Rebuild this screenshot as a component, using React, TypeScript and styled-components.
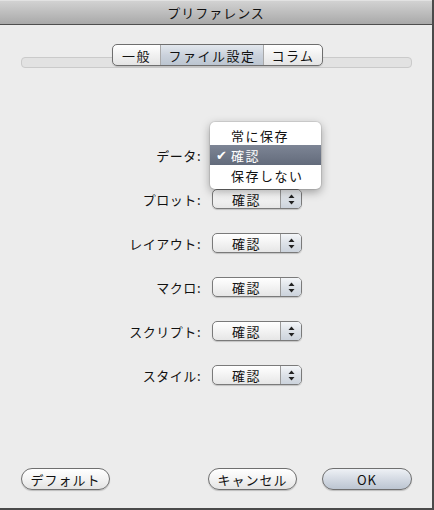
import React from "react";
import styled, { createGlobalStyle } from "styled-components";

const GlobalStyle = createGlobalStyle`
  html, body {
    margin: 0;
    padding: 0;
    background: #ececec;
  }
  body {
    font-family: "Noto Sans CJK JP", "Liberation Sans", sans-serif;
    -webkit-font-smoothing: antialiased;
  }
`;

const rows = ["データ", "プロット", "レイアウト", "マクロ", "スクリプト", "スタイル"];

const Arrows = () => (
  <svg width="7" height="11" viewBox="0 0 7 11">
    <path d="M3.5 0.5 L6.5 4 L0.5 4 Z" fill="#222" />
    <path d="M3.5 10.5 L6.5 7 L0.5 7 Z" fill="#222" />
  </svg>
);

const App = () => {
  return (
    <>
      <GlobalStyle />
      <Window>
        <TitleBar>プリファレンス</TitleBar>
        <Body>
          <TabArea>
            <TabStrip>
              <Tab width={47}>一般</Tab>
              <Tab width={103} selected>
                ファイル設定
              </Tab>
              <Tab width={59}>コラム</Tab>
            </TabStrip>
            <Groove />
          </TabArea>
          <Form>
            {rows.map((label, i) => (
              <Row key={label}>
                <Label>{label}:</Label>
                <PopupWrap>
                  {i > 0 && (
                    <Popup>
                      <span className="value">確認</span>
                      <span className="arrows">
                        <Arrows />
                      </span>
                    </Popup>
                  )}
                  {i === 0 && (
                    <Menu>
                      <MenuItem>常に保存</MenuItem>
                      <MenuItem active>
                        <span className="check">✔</span>確認
                      </MenuItem>
                      <MenuItem>保存しない</MenuItem>
                    </Menu>
                  )}
                </PopupWrap>
              </Row>
            ))}
          </Form>
          <Footer>
            <Button>デフォルト</Button>
            <div className="right">
              <Button>キャンセル</Button>
              <Button primary>OK</Button>
            </div>
          </Footer>
        </Body>
      </Window>
    </>
  );
};

const Window = styled.div`
  width: 434px;
  height: 510px;
  box-sizing: border-box;
  display: flex;
  flex-direction: column;
  border-right: 2px solid #4a4a4a;
  border-bottom: 2px solid #4a4a4a;
  background: #ececec;
  overflow: hidden;
`;

const TitleBar = styled.div`
  height: 23px;
  flex-shrink: 0;
  display: flex;
  align-items: center;
  justify-content: center;
  border-top: 1px solid #e2e2e2;
  border-bottom: 1px solid #4e4e4e;
  background: linear-gradient(#d2d2d2, #a9a9a9);
  font-size: 13px;
  color: #111;
  letter-spacing: 1px;
`;

const Body = styled.div`
  flex: 1;
  display: flex;
  flex-direction: column;
  padding: 19px 20px 0 21px;
`;

const TabArea = styled.div`
  display: flex;
  flex-direction: column;
  align-items: center;
`;

const TabStrip = styled.div`
  display: flex;
  height: 20px;
  margin-bottom: -9px;
  margin-left: 2px;
  position: relative;
  z-index: 1;
  border: 1px solid #6e6e6e;
  border-radius: 5px;
  overflow: hidden;
  background: linear-gradient(#ffffff, #f1f1f1 50%, #e4e4e4);
  box-shadow: 0 1px 1px rgba(0, 0, 0, 0.15);
`;

const Tab = styled.div<{ selected?: boolean; width: number }>`
  width: ${(p) => p.width}px;
  box-sizing: border-box;
  display: flex;
  align-items: center;
  justify-content: center;
  font-size: 13px;
  letter-spacing: 1.5px;
  color: #111;
  border-left: 1px solid #a9a9a9;
  background: ${(p) =>
    p.selected ? "linear-gradient(#e3e8ee, #cbd2dc 50%, #bcc5d0)" : "transparent"};
  &:first-child {
    border-left: none;
  }
`;

const Groove = styled.div`
  align-self: stretch;
  height: 11px;
  box-sizing: border-box;
  border: 1px solid #cacaca;
  border-radius: 4px;
  background: #e2e2e2;
`;

const Form = styled.div`
  display: flex;
  flex-direction: column;
  gap: 24px;
  padding-top: 77px;
  flex: 1;
`;

const Row = styled.div`
  display: grid;
  grid-template-columns: 180px 90px;
  column-gap: 11px;
  height: 20px;
  align-items: center;
`;

const Label = styled.div`
  text-align: right;
  font-size: 13px;
  letter-spacing: 0.5px;
  color: #111;
`;

const PopupWrap = styled.div`
  position: relative;
  height: 20px;
`;

const Popup = styled.div`
  height: 20px;
  box-sizing: border-box;
  display: flex;
  border: 1px solid #7a7a7a;
  border-radius: 5px;
  background: linear-gradient(#ffffff, #f3f3f3 50%, #e6e6e6);
  box-shadow: 0 1px 1px rgba(0, 0, 0, 0.18);
  overflow: hidden;
  .value {
    flex: 1;
    display: flex;
    align-items: center;
    justify-content: center;
    font-size: 13px;
    letter-spacing: 1.5px;
    color: #111;
  }
  .arrows {
    width: 20px;
    display: flex;
    align-items: center;
    justify-content: center;
    border-left: 1px solid #9a9a9a;
    background: linear-gradient(#f4f6f9, #dde2e8 50%, #ccd3dc);
  }
`;

const Menu = styled.div`
  position: absolute;
  left: -2px;
  top: -23px;
  width: 111px;
  padding: 3px 0 4px;
  box-sizing: border-box;
  background: #ffffff;
  border-radius: 5px;
  box-shadow: 0 3px 10px rgba(0, 0, 0, 0.35), 0 0 0 1px rgba(0, 0, 0, 0.08);
  z-index: 2;
`;

const MenuItem = styled.div<{ active?: boolean }>`
  position: relative;
  height: 20px;
  display: flex;
  align-items: center;
  padding-left: 21px;
  font-size: 13px;
  letter-spacing: 1.5px;
  color: ${(p) => (p.active ? "#ffffff" : "#111")};
  background: ${(p) => (p.active ? "linear-gradient(#7d8595, #636b7b)" : "transparent")};
  .check {
    position: absolute;
    left: 6px;
    font-family: "DejaVu Sans", sans-serif;
    font-size: 13px;
  }
`;

const Footer = styled.div`
  display: flex;
  justify-content: space-between;
  align-items: center;
  padding-bottom: 18px;
  .right {
    display: flex;
    gap: 25px;
  }
`;

const Button = styled.button<{ primary?: boolean }>`
  width: ${(p) => (p.primary ? "90px" : "89px")};
  height: 22px;
  box-sizing: border-box;
  border: 1px solid #6f6f6f;
  border-radius: 11px;
  padding: 0;
  font-family: "Noto Sans CJK JP", "Liberation Sans", sans-serif;
  font-size: 13px;
  letter-spacing: 1px;
  color: #111;
  background: ${(p) =>
    p.primary
      ? "linear-gradient(#eef1f5, #d4dae3 50%, #bcc5d1)"
      : "linear-gradient(#ffffff, #f3f3f3 50%, #e3e3e3)"};
  box-shadow: 0 1px 1px rgba(0, 0, 0, 0.2);
`;

export default App;
